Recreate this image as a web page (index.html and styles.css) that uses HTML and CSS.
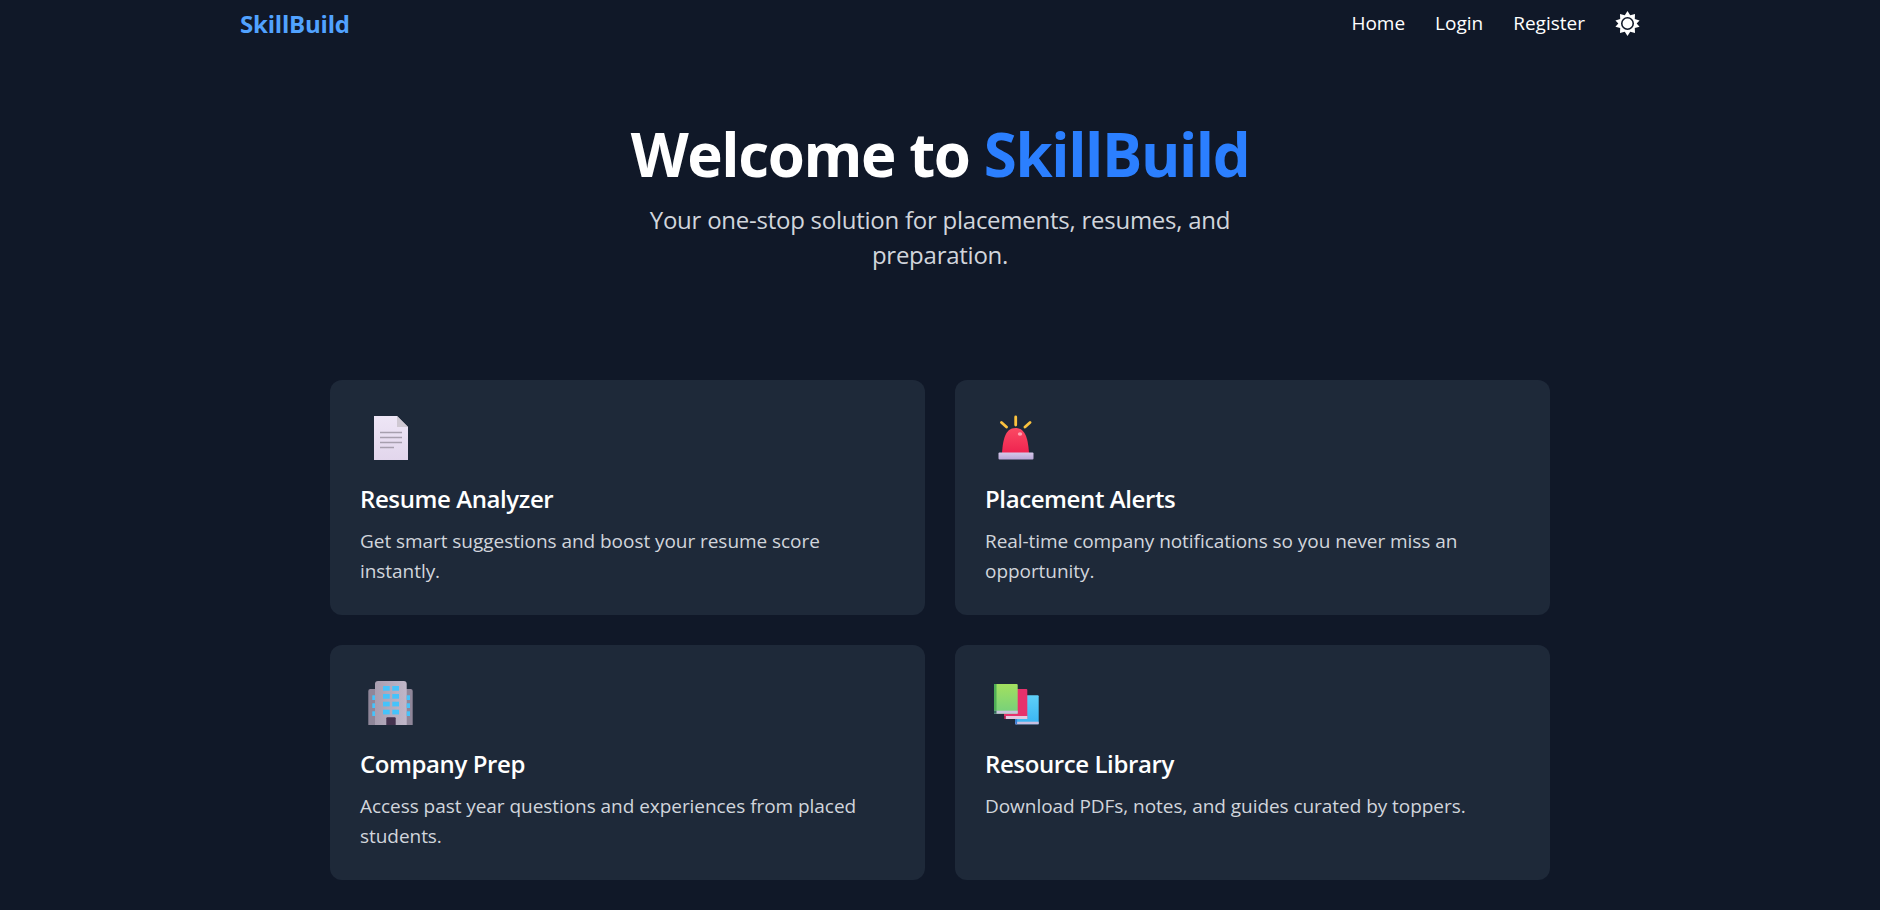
FILE: index.html
```html
<!DOCTYPE html>
<html lang="en">
<head>
  <meta charset="UTF-8">
  <meta name="viewport" content="width=device-width, initial-scale=1.0">
  <title>SkillBuild</title>
  <link rel="stylesheet" href="styles.css">
</head>
<body>
  <nav class="navbar">
    <a class="logo" href="#">SkillBuild</a>
    <div class="nav-links">
      <a href="#">Home</a>
      <a href="#">Login</a>
      <a href="#">Register</a>
      <svg class="theme-icon" viewBox="0 0 24 24">
        <path fill="#fff" d="M12 0l2.600 4 4.600-1.200-.2 4.800 4.600 1.400-2.800 3 2.800 3-4.600 1.400.2 4.800-4.600-1.200-2.600 4-2.600-4-4.600 1.200.2-4.800L.4 15l2.800-3-2.800-3 4.600-1.400-.2-4.800 4.600 1.200z"/>
        <circle cx="12" cy="12" r="5.500" fill="#fff" stroke="#101828" stroke-width="1.500"/>
      </svg>
    </div>
  </nav>

  <section class="hero">
    <h1>Welcome to <span>SkillBuild</span></h1>
    <p>Your one-stop solution for placements, resumes, and preparation.</p>
  </section>

  <section class="features">
    <div class="card">
      <svg class="card-icon" viewBox="0 0 62 60">
        <defs>
          <linearGradient id="paper" x1="0" y1="0" x2="0" y2="1">
            <stop offset="0" stop-color="#eee6f6"/>
            <stop offset="1" stop-color="#e2d6ec"/>
          </linearGradient>
        </defs>
        <path fill="url(#paper)" d="M14 6h23l11 11v33H14z"/>
        <path fill="#cfc8d2" d="M37 6l11 11H37z"/>
        <path stroke="#a79fae" stroke-width="1.500" d="M20 22.500h22M20 27.500h22M20 32.500h22M20 37.500h14"/>
      </svg>
      <h3>Resume Analyzer</h3>
      <p>Get smart suggestions and boost your resume score instantly.</p>
    </div>

    <div class="card">
      <svg class="card-icon" viewBox="0 0 62 60">
        <defs>
          <linearGradient id="dome" x1="0" y1="0" x2="0" y2="1">
            <stop offset="0" stop-color="#fb4a63"/>
            <stop offset="1" stop-color="#ee2350"/>
          </linearGradient>
          <linearGradient id="base" x1="0" y1="0" x2="0" y2="1">
            <stop offset="0" stop-color="#d6c8ea"/>
            <stop offset="1" stop-color="#b9a6d6"/>
          </linearGradient>
        </defs>
        <path stroke="#fbc23f" stroke-width="2.800" stroke-linecap="round" d="M30.700 7v8M16.500 12.500l5 4.500M45 12.500l-5 4.500"/>
        <path fill="url(#dome)" d="M17 43C18 30 20 18 30.500 18S43 30 44 43z"/>
        <ellipse cx="35" cy="24" rx="2.200" ry="1.800" fill="#fda4b4"/>
        <rect x="13.500" y="42.500" width="35" height="7" rx="1" fill="url(#base)"/>
      </svg>
      <h3>Placement Alerts</h3>
      <p>Real-time company notifications so you never miss an opportunity.</p>
    </div>

    <div class="card">
      <svg class="card-icon" viewBox="0 0 62 60">
        <defs>
          <linearGradient id="wall" x1="0" y1="0" x2="1" y2="0">
            <stop offset="0" stop-color="#a89eb0"/>
            <stop offset="1" stop-color="#c0b6c8"/>
          </linearGradient>
        </defs>
        <path fill="#8f8699" d="M8.300 50V16a2 2 0 0 1 2-2h40.400a2 2 0 0 1 2 2v34z"/>
        <path fill="url(#wall)" d="M15 50V9a3 3 0 0 1 3-3h25.700a3 3 0 0 1 3 3v41z"/>
        <g fill="#45c3fb">
          <rect x="23" y="11" width="6.700" height="4.700"/><rect x="32.300" y="11" width="6.700" height="4.700"/>
          <rect x="23" y="19" width="6.700" height="4.700"/><rect x="32.300" y="19" width="6.700" height="4.700"/>
          <rect x="23" y="26.700" width="6.700" height="4.700"/><rect x="32.300" y="26.700" width="6.700" height="4.700"/>
          <rect x="23" y="34.700" width="6.700" height="4.700"/><rect x="32.300" y="34.700" width="6.700" height="4.700"/>
          <rect x="12.300" y="20.300" width="2.700" height="4.700"/><rect x="12.300" y="28.300" width="2.700" height="4.700"/><rect x="12.300" y="36.300" width="2.700" height="4.700"/>
          <rect x="46.700" y="20.300" width="3.300" height="4.700"/><rect x="46.700" y="28.300" width="3.300" height="4.700"/><rect x="46.700" y="36.300" width="3.300" height="4.700"/>
        </g>
        <path fill="#45334f" d="M26.300 50v-6.700a1 1 0 0 1 1-1h7.400a1 1 0 0 1 1 1V50z"/>
      </svg>
      <h3>Company Prep</h3>
      <p>Access past year questions and experiences from placed students.</p>
    </div>

    <div class="card">
      <svg class="card-icon" viewBox="0 0 62 60">
        <defs>
          <linearGradient id="green" x1="0" y1="0" x2="0" y2="1">
            <stop offset="0" stop-color="#a3e05f"/>
            <stop offset="1" stop-color="#74d07c"/>
          </linearGradient>
          <linearGradient id="blue" x1="0" y1="0" x2="0" y2="1">
            <stop offset="0" stop-color="#5fd0f8"/>
            <stop offset="1" stop-color="#38b4f4"/>
          </linearGradient>
        </defs>
        <rect x="30.300" y="20.300" width="23.400" height="29" rx="1" fill="url(#blue)"/>
        <rect x="30.300" y="46.700" width="23.400" height="2.600" fill="#c9bfe0"/>
        <rect x="30.300" y="20.300" width="1.800" height="29" fill="#3a7bd5"/>
        <rect x="19" y="14" width="23.300" height="30" rx="1" fill="#e6316c"/>
        <rect x="19" y="41" width="23.300" height="3" fill="#e4c8e0"/>
        <rect x="19" y="41" width="1.800" height="3" fill="#a81f50"/>
        <rect x="9" y="9" width="23.700" height="29.700" rx="1" fill="url(#green)"/>
        <rect x="9" y="9" width="2.500" height="29.700" fill="#4fae55"/>
        <rect x="9" y="35.700" width="23.700" height="3" fill="#c9c3dc"/>
        <rect x="9" y="35.700" width="2.500" height="3" fill="#35705c"/>
      </svg>
      <h3>Resource Library</h3>
      <p>Download PDFs, notes, and guides curated by toppers.</p>
    </div>
  </section>
</body>
</html>
```

FILE: styles.css
```css
* {
  box-sizing: border-box;
}
body {
  font-family: 'Open Sans', 'Noto Sans', sans-serif;
  background-color: #101828;
  color: #ffffff;
  margin: 0;
  padding: 0;
  overflow: hidden;
}
a {
  color: inherit;
  text-decoration: none;
}
.navbar {
  width: 1400px;
  height: 46px;
  margin: 0 auto;
  display: flex;
  align-items: center;
  justify-content: space-between;
}
.logo {
  font-size: 24px;
  font-weight: 700;
  letter-spacing: -0.2px;
  color: #51a2ff;
}
.nav-links {
  display: flex;
  align-items: center;
  gap: 30px;
  font-size: 19px;
}
.theme-icon {
  width: 25px;
  height: 25px;
}
.hero {
  padding-top: 72px;
  text-align: center;
}
.hero h1 {
  margin: 0 0 12px;
  font-size: 60px;
  line-height: 72px;
  font-weight: 700;
  letter-spacing: -1.4px;
}
.hero h1 span {
  color: #2b7fff;
}
.hero p {
  width: 600px;
  margin: 0 auto;
  font-size: 24px;
  line-height: 35px;
  letter-spacing: -0.25px;
  color: #d1d5dc;
}
.features {
  width: 1220px;
  margin: 0 auto;
  padding-top: 108px;
  display: grid;
  grid-template-columns: 1fr 1fr;
  gap: 30px;
}
.card {
  height: 235px;
  padding: 30px;
  background-color: #1e2939;
  border-radius: 12px;
}
.card-icon {
  display: block;
  width: 62px;
  height: 60px;
}
.card h3 {
  margin: 13px 0 11px;
  font-size: 24px;
  line-height: 32px;
  font-weight: 600;
  letter-spacing: -0.4px;
}
.card p {
  margin: 0;
  font-size: 19px;
  line-height: 30px;
  letter-spacing: -0.05px;
  color: #d1d5dc;
}
```
